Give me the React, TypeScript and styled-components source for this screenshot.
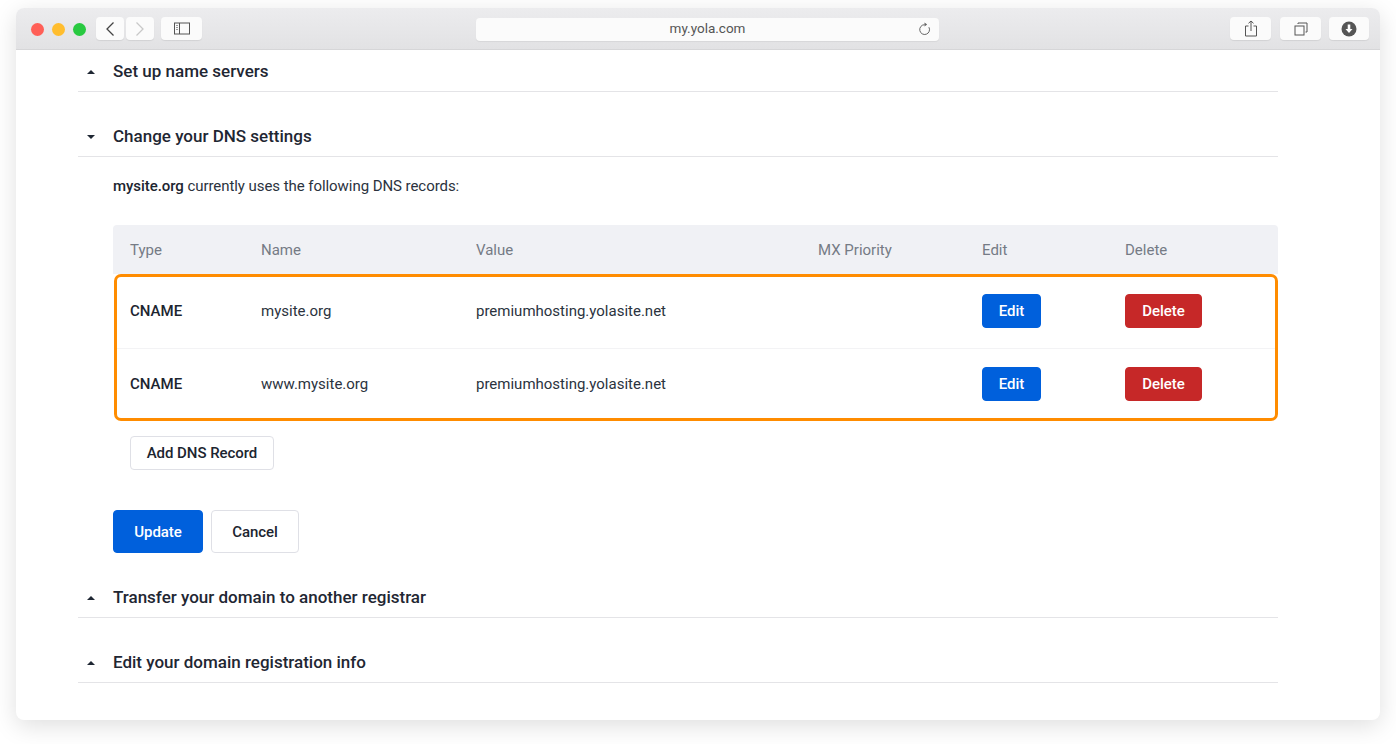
import React from "react";
import styled, { createGlobalStyle } from "styled-components";

const GlobalStyle = createGlobalStyle`
  html, body { margin: 0; padding: 0; background: #fff; }
  body { font-family: Roboto, "Liberation Sans", sans-serif; color: #1c2530; }
  * { box-sizing: border-box; }
`;

const Page = styled.div`
  width: 1396px;
  height: 744px;
  padding: 8px 16px 24px;
  overflow: hidden;
`;

const Browser = styled.div`
  height: 712px;
  background: #fff;
  border-radius: 8px;
  box-shadow: 0 6px 24px rgba(0, 0, 0, 0.13);
  overflow: hidden;
`;

const TitleBar = styled.div`
  height: 42px;
  display: flex;
  align-items: flex-start;
  padding-top: 9px;
  background: linear-gradient(#ececee, #e2e2e4);
  border-bottom: 1px solid #d6d6d8;
`;

const Lights = styled.div`
  display: flex;
  gap: 8px;
  margin: 6px 10px 0 15px;
`;

const Light = styled.span<{ $color: string }>`
  width: 13px;
  height: 13px;
  border-radius: 50%;
  background: ${(p) => p.$color};
`;

const ToolButton = styled.div<{ $w: number; $ml?: number }>`
  width: ${(p) => p.$w}px;
  height: 23px;
  margin-left: ${(p) => p.$ml ?? 0}px;
  background: #fbfbfb;
  border-radius: 4px;
  box-shadow: 0 1px 1px rgba(0, 0, 0, 0.08);
  display: flex;
  align-items: center;
  justify-content: center;
`;

const AddressBar = styled.div`
  position: relative;
  width: 463px;
  height: 23px;
  margin: 1px 0 0 274px;
  background: #fbfbfb;
  border-radius: 4px;
  box-shadow: 0 1px 1px rgba(0, 0, 0, 0.06);
  font-size: 13.5px;
  line-height: 21px;
  color: #555;
  text-align: center;
`;

const Reload = styled.svg`
  position: absolute;
  right: 8px;
  top: 4px;
`;

const RightTools = styled.div`
  display: flex;
  margin-left: auto;
  margin-right: 11px;
`;

const Content = styled.div`
  width: 1200px;
  margin-left: 62px;
  padding-top: 2px;
`;

const SectionHeader = styled.div<{ $open?: boolean }>`
  height: 40px;
  display: flex;
  align-items: center;
  padding: 0 0 2px 9px;
  margin-bottom: ${(p) => (p.$open ? 0 : 25)}px;
  border-bottom: 1px solid #e4e4e7;
  font-size: 17px;
  font-weight: 500;
  color: #1f2733;
`;

const Caret = styled.span<{ $open?: boolean }>`
  width: 0;
  height: 0;
  margin: 2px 18px 0 0;
  border-left: 4px solid transparent;
  border-right: 4px solid transparent;
  ${(p) =>
    p.$open
      ? "border-top: 4px solid #1f2733;"
      : "border-bottom: 4px solid #1f2733;"}
`;

const Panel = styled.div`
  padding-left: 35px;
  margin-bottom: 25px;
`;

const Intro = styled.p`
  margin: 0;
  padding-top: 19px;
  height: 68px;
  font-size: 15px;
  line-height: 20px;
  letter-spacing: -0.06px;
  color: #2b333e;
  strong {
    font-weight: 500;
    color: #1c2530;
  }
`;

const HeadRow = styled.div`
  display: grid;
  grid-template-columns: 148px 215px 342px 164px 143px 1fr;
  align-items: center;
  height: 49px;
  background: #f0f1f5;
  border-radius: 4px 4px 0 0;
  font-size: 15px;
  color: #757b85;
  span:first-child {
    padding-left: 17px;
  }
`;

const Highlight = styled.div`
  margin-left: 1px;
  height: 147px;
  border: 3px solid #ff8c00;
  border-radius: 7px;
`;

const Row = styled.div<{ $last?: boolean }>`
  display: grid;
  grid-template-columns: 131px 215px 342px 164px 143px 1fr;
  align-items: center;
  height: ${(p) => (p.$last ? 69 : 72)}px;
  padding: ${(p) => (p.$last ? "1px 0 0 13px" : "0 0 3px 13px")};
  border-bottom: ${(p) => (p.$last ? "none" : "1px solid #f3f3f5")};
  font-size: 15px;
  color: #2b333e;
`;

const TypeCell = styled.span`
  font-weight: 500;
  color: #1c2530;
`;

const CellAction = styled.span`
  display: flex;
`;

const Button = styled.button<{ $kind: "blue" | "red" | "plain"; $w: number; $h: number }>`
  width: ${(p) => p.$w}px;
  height: ${(p) => p.$h}px;
  padding: 0;
  font-family: inherit;
  font-size: 15px;
  font-weight: 500;
  letter-spacing: -0.05px;
  border-radius: 4px;
  border: 1px solid
    ${(p) => (p.$kind === "blue" ? "#0060dc" : p.$kind === "red" ? "#c62828" : "#dfe0e6")};
  background: ${(p) => (p.$kind === "blue" ? "#0060dc" : p.$kind === "red" ? "#c62828" : "#fff")};
  color: ${(p) => (p.$kind === "plain" ? "#1c2530" : "#fff")};
`;

const AddRow = styled.div`
  padding: 15px 0 40px 17px;
  display: flex;
`;

const Actions = styled.div`
  display: flex;
  gap: 8px;
`;

const records = ["mysite.org", "www.mysite.org"];

const App = () => (
  <Page>
    <GlobalStyle />
    <Browser>
      <TitleBar>
        <Lights>
          <Light $color="#ff5f57" />
          <Light $color="#ffbd2e" />
          <Light $color="#28c940" />
        </Lights>
        <ToolButton $w={28}>
          <svg width="12" height="16" viewBox="0 0 12 16" fill="none" stroke="#444" strokeWidth="1.3">
            <path d="M9.5 1.5 3 8l6.5 6.5" />
          </svg>
        </ToolButton>
        <ToolButton $w={28} $ml={2}>
          <svg width="12" height="16" viewBox="0 0 12 16" fill="none" stroke="#c8c8c8" strokeWidth="1.3">
            <path d="M2.5 1.5 9 8l-6.5 6.5" />
          </svg>
        </ToolButton>
        <ToolButton $w={41} $ml={7}>
          <svg width="18" height="13" viewBox="0 0 18 13" fill="none" stroke="#555" strokeWidth="1">
            <rect x="1.5" y="1" width="15" height="11" />
            <path d="M6.5 1v11" />
            <path d="M3 3.5h2M3 5.5h2M3 7.5h2" stroke="#999" />
          </svg>
        </ToolButton>
        <AddressBar>
          my.yola.com
          <Reload width="13" height="14" viewBox="0 0 13 14" fill="none" stroke="#666" strokeWidth="1">
            <path d="M10.9 5.200A4.900 4.900 0 1 1 6.500 2.700" />
            <path d="M6.500.6l2.700 2-2.700 2z" fill="#666" stroke="none" />
          </Reload>
        </AddressBar>
        <RightTools>
          <ToolButton $w={41}>
            <svg width="14" height="17" viewBox="0 0 14 17" fill="none" stroke="#555" strokeWidth="1">
              <path d="M4.500 6H1.500v10h11V6H9.500" />
              <path d="M7 11V1M4.500 3.300 7 1l2.500 2.300" />
            </svg>
          </ToolButton>
          <ToolButton $w={41} $ml={9}>
            <svg width="14" height="14" viewBox="0 0 14 14" fill="none" stroke="#555" strokeWidth="1">
              <rect x="1" y="4" width="9" height="9" />
              <path d="M4 2V1h9v9h-1.500" />
            </svg>
          </ToolButton>
          <ToolButton $w={40} $ml={8}>
            <svg width="16" height="16" viewBox="0 0 16 16">
              <circle cx="8" cy="8" r="7.500" fill="#555" />
              <path d="M6.700 3.500h2.600V8h2.200L8 12 4.500 8h2.200z" fill="#fff" />
            </svg>
          </ToolButton>
        </RightTools>
      </TitleBar>
      <Content>
        <SectionHeader>
          <Caret />
          Set up name servers
        </SectionHeader>
        <SectionHeader $open>
          <Caret $open />
          Change your DNS settings
        </SectionHeader>
        <Panel>
          <Intro>
            <strong>mysite.org</strong> currently uses the following DNS records:
          </Intro>
          <HeadRow>
            <span>Type</span>
            <span>Name</span>
            <span>Value</span>
            <span>MX Priority</span>
            <span>Edit</span>
            <span>Delete</span>
          </HeadRow>
          <Highlight>
            {records.map((name, i) => (
              <Row key={name} $last={i === records.length - 1}>
                <TypeCell>CNAME</TypeCell>
                <span>{name}</span>
                <span>premiumhosting.yolasite.net</span>
                <span />
                <CellAction>
                  <Button $kind="blue" $w={59} $h={34}>
                    Edit
                  </Button>
                </CellAction>
                <CellAction>
                  <Button $kind="red" $w={77} $h={34}>
                    Delete
                  </Button>
                </CellAction>
              </Row>
            ))}
          </Highlight>
          <AddRow>
            <Button $kind="plain" $w={144} $h={34}>
              Add DNS Record
            </Button>
          </AddRow>
          <Actions>
            <Button $kind="blue" $w={90} $h={43}>
              Update
            </Button>
            <Button $kind="plain" $w={88} $h={43}>
              Cancel
            </Button>
          </Actions>
        </Panel>
        <SectionHeader>
          <Caret />
          Transfer your domain to another registrar
        </SectionHeader>
        <SectionHeader>
          <Caret />
          Edit your domain registration info
        </SectionHeader>
      </Content>
    </Browser>
  </Page>
);

export default App;
